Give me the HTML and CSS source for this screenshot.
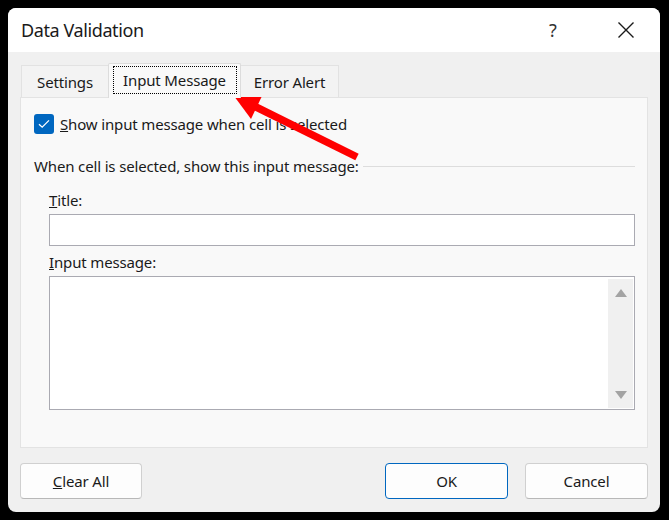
FILE: index.html
```html
<!DOCTYPE html>
<html lang="en">
<head>
  <meta charset="UTF-8">
  <meta name="viewport" content="width=device-width, initial-scale=1.0">
  <title>Data Validation</title>
  <link rel="stylesheet" href="styles.css">
</head>
<body>
  <div class="dialog">
    <div class="titlebar">
      <span class="title">Data Validation</span>
      <span class="help">?</span>
      <span class="close">
        <svg width="18" height="18" viewBox="0 0 18 18"><path d="M1.5 1.5 L16.5 16.5 M16.5 1.5 L1.5 16.5" stroke="#1a1a1a" stroke-width="1.4" fill="none"/></svg>
      </span>
    </div>

    <div class="content">
      <div class="tabs">
        <div class="tab tab-settings">Settings</div>
        <div class="tab tab-active"><span class="focus">Input Message</span></div>
        <div class="tab tab-error">Error Alert</div>
      </div>

      <div class="panel">
        <label class="check-row">
          <span class="checkbox">
            <svg width="12" height="10" viewBox="0 0 12 10"><path d="M1 5.2 L4.2 8.2 L11 1.4" stroke="#fff" stroke-width="1.3" fill="none"/></svg>
          </span>
          <span><u>S</u>how input message when cell is selected</span>
        </label>

        <div class="group-head">
          <span>When cell is selected, show this input message:</span>
          <span class="rule"></span>
        </div>

        <div class="field">
          <div class="field-label"><u>T</u>itle:</div>
          <div class="textbox"></div>
        </div>

        <div class="field field-message">
          <div class="field-label"><u>I</u>nput message:</div>
          <div class="textarea">
            <div class="scrollbar">
              <span class="arrow-up"></span>
              <span class="arrow-down"></span>
            </div>
          </div>
        </div>
      </div>

      <div class="buttons">
        <button class="btn"><u>C</u>lear All</button>
        <span class="spacer"></span>
        <button class="btn btn-primary">OK</button>
        <button class="btn">Cancel</button>
      </div>
    </div>
  </div>

  <svg class="pointer" width="669" height="520" viewBox="0 0 669 520">
    <line x1="252" y1="105" x2="357" y2="157" stroke="#ff0000" stroke-width="7.5"/>
    <polygon points="234,96 262,96 251,119" fill="#ff0000"/>
  </svg>
</body>
</html>
```

FILE: styles.css
```css
body {
  margin: 0;
  padding: 8px 9px 8px 8px;
  background: #000;
  font-family: "Noto Sans", "Open Sans", Arial, sans-serif;
  font-size: 15px;
  letter-spacing: -0.15px;
  color: #1a1a1a;
}

.dialog {
  width: 652px;
  height: 504px;
  background: #f0f0f0;
  border-radius: 8px;
  overflow: hidden;
  display: flex;
  flex-direction: column;
}

.titlebar {
  height: 44px;
  background: #fff;
  display: flex;
  align-items: center;
  padding: 0 0 0 13px;
}

.title {
  font-size: 18px;
  letter-spacing: -0.4px;
  flex: 1;
}

.help {
  font-size: 18px;
  width: 20px;
  margin-right: 48px;
  color: #333;
}

.close {
  width: 18px;
  margin-right: 25px;
  display: flex;
}

.content {
  flex: 1;
  padding: 11px 12px 0 12px;
  display: flex;
  flex-direction: column;
}

.tabs {
  display: flex;
  align-items: flex-end;
  height: 34px;
  margin-left: 1px;
  position: relative;
  z-index: 1;
}

.tab {
  height: 32px;
  box-sizing: border-box;
  display: flex;
  align-items: center;
  justify-content: center;
  background: #f3f3f3;
  border: 1px solid #e2e2e2;
  border-bottom: none;
}

.tab-settings {
  width: 87px;
  border-right: none;
}

.tab-active {
  width: 133px;
  height: 35px;
  margin-bottom: -1px;
  background: #f9f9f9;
  border-color: #dcdcdc;
  border-radius: 2px 2px 0 0;
}

.focus {
  border: 1px dotted #000;
  width: 124px;
  height: 28px;
  box-sizing: border-box;
  display: flex;
  align-items: center;
  justify-content: center;
  margin-bottom: 2px;
}

.tab-error {
  width: 98px;
  border-left: none;
}

.panel {
  height: 351px;
  box-sizing: border-box;
  background: #f9f9f9;
  border: 1px solid #e3e3e3;
  padding: 15px 12px 0 13px;
}

.check-row {
  display: flex;
  align-items: center;
  gap: 6px;
  height: 22px;
}

.checkbox {
  width: 20px;
  height: 20px;
  border-radius: 3px;
  background: #0067c0;
  display: flex;
  align-items: center;
  justify-content: center;
}

.group-head {
  display: flex;
  align-items: center;
  gap: 4px;
  margin-top: 20px;
  height: 22px;
}

.rule {
  flex: 1;
  border-top: 1px solid #dddddd;
}

.field {
  margin-left: 15px;
}

.field-label {
  height: 22px;
  line-height: 22px;
  margin-top: 12px;
  margin-bottom: 3px;
}

.field-message .field-label {
  margin-top: 5px;
}

.textbox {
  height: 32px;
  box-sizing: border-box;
  background: #fff;
  border: 1px solid #aaaab2;
}

.textarea {
  height: 134px;
  box-sizing: border-box;
  background: #fff;
  border: 1px solid #aaaab2;
  display: flex;
  justify-content: flex-end;
  padding: 2px 1px 1px 0;
}

.scrollbar {
  width: 25px;
  background: #f0f0f0;
  display: flex;
  flex-direction: column;
  justify-content: space-between;
  align-items: center;
  padding: 10px 0 9px;
}

.arrow-up {
  width: 0;
  height: 0;
  border-left: 6px solid transparent;
  border-right: 6px solid transparent;
  border-bottom: 8px solid #a3a3a3;
}

.arrow-down {
  width: 0;
  height: 0;
  border-left: 6px solid transparent;
  border-right: 6px solid transparent;
  border-top: 8px solid #a3a3a3;
}

.buttons {
  display: flex;
  gap: 17px;
  margin-top: 15px;
}

.spacer {
  flex: 1;
}

.btn {
  width: 123px;
  height: 36px;
  background: #fdfdfd;
  border: 1px solid #d0d0d0;
  border-bottom-color: #b8b8b8;
  border-radius: 4px;
  font-family: inherit;
  font-size: 15px;
  letter-spacing: inherit;
  color: #1a1a1a;
  padding: 0;
}

.btn:first-child {
  width: 122px;
}

.btn-primary {
  border: 1px solid #0067c0;
}

.pointer {
  position: absolute;
  left: 0;
  top: 0;
}
```
